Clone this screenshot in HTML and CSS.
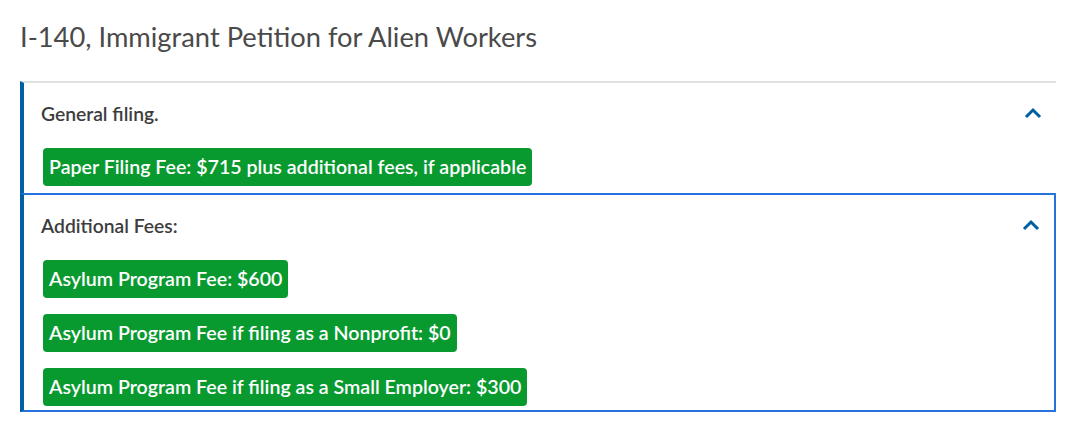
FILE: index.html
```html
<!DOCTYPE html>
<html lang="en">
<head>
<meta charset="utf-8">
<title>I-140 Fees</title>
<link rel="stylesheet" href="styles.css">
</head>
<body>
<main class="page">
  <h1 class="title">I-140, Immigrant Petition for Alien Workers</h1>
  <div class="accordion">
    <section class="item">
      <div class="item-head">
        <span class="item-label">General filing.</span>
        <svg class="chev" width="18" height="12" viewBox="0 0 18 12" aria-hidden="true"><polyline points="2,10 9,3 16,10" fill="none" stroke="currentColor" stroke-width="3"/></svg>
      </div>
      <div class="item-body">
        <span class="badge">Paper Filing Fee: $715 plus additional fees, if applicable</span>
      </div>
    </section>
    <section class="item item-focus">
      <div class="item-head">
        <span class="item-label">Additional Fees:</span>
        <svg class="chev" width="18" height="12" viewBox="0 0 18 12" aria-hidden="true"><polyline points="2,10 9,3 16,10" fill="none" stroke="currentColor" stroke-width="3"/></svg>
      </div>
      <div class="item-body">
        <span class="badge">Asylum Program Fee: $600</span>
        <span class="badge">Asylum Program Fee if filing as a Nonprofit: $0</span>
        <span class="badge">Asylum Program Fee if filing as a Small Employer: $300</span>
      </div>
    </section>
  </div>
</main>
</body>
</html>
```

FILE: styles.css
```css
html, body {
  margin: 0;
  padding: 0;
  background: #ffffff;
}

.page {
  padding: 17px 24px 0 20px;
  font-family: "Lato", "Liberation Sans", sans-serif;
}

.title {
  margin: 0 0 24px 0;
  font-size: 27.3px;
  line-height: 40px;
  font-weight: 400;
  color: #4a4a4a;
}

.accordion {
  display: flex;
  flex-direction: column;
}

.item {
  border-top: 2px solid #dfe1e2;
  border-left: 4px solid #005ea2;
  display: flex;
  flex-direction: column;
}

.item-focus {
  border-top: 2px solid #2672de;
  border-right: 2px solid #2672de;
  border-bottom: 2px solid #2672de;
  box-shadow: 0 1px 0 #c9c9c9;
}

.item-head {
  height: 60px;
  display: flex;
  align-items: center;
  justify-content: space-between;
  padding: 0 14px 0 17px;
}

.item-label {
  font-size: 19.3px;
  font-weight: 600;
  color: #3d3d3d;
}

.chev {
  color: #005ea2;
  display: block;
}

.item-body {
  display: flex;
  flex-direction: column;
  align-items: flex-start;
  gap: 16px;
  padding: 5px 0 7px 19px;
}

.item-focus .item-body {
  padding-bottom: 4px;
}

.badge {
  display: inline-block;
  background: #089a2f;
  color: #ffffff;
  font-size: 19.6px;
  font-weight: 600;
  line-height: 38px;
  height: 38px;
  padding: 0 6px;
  border-radius: 4px;
}
```
